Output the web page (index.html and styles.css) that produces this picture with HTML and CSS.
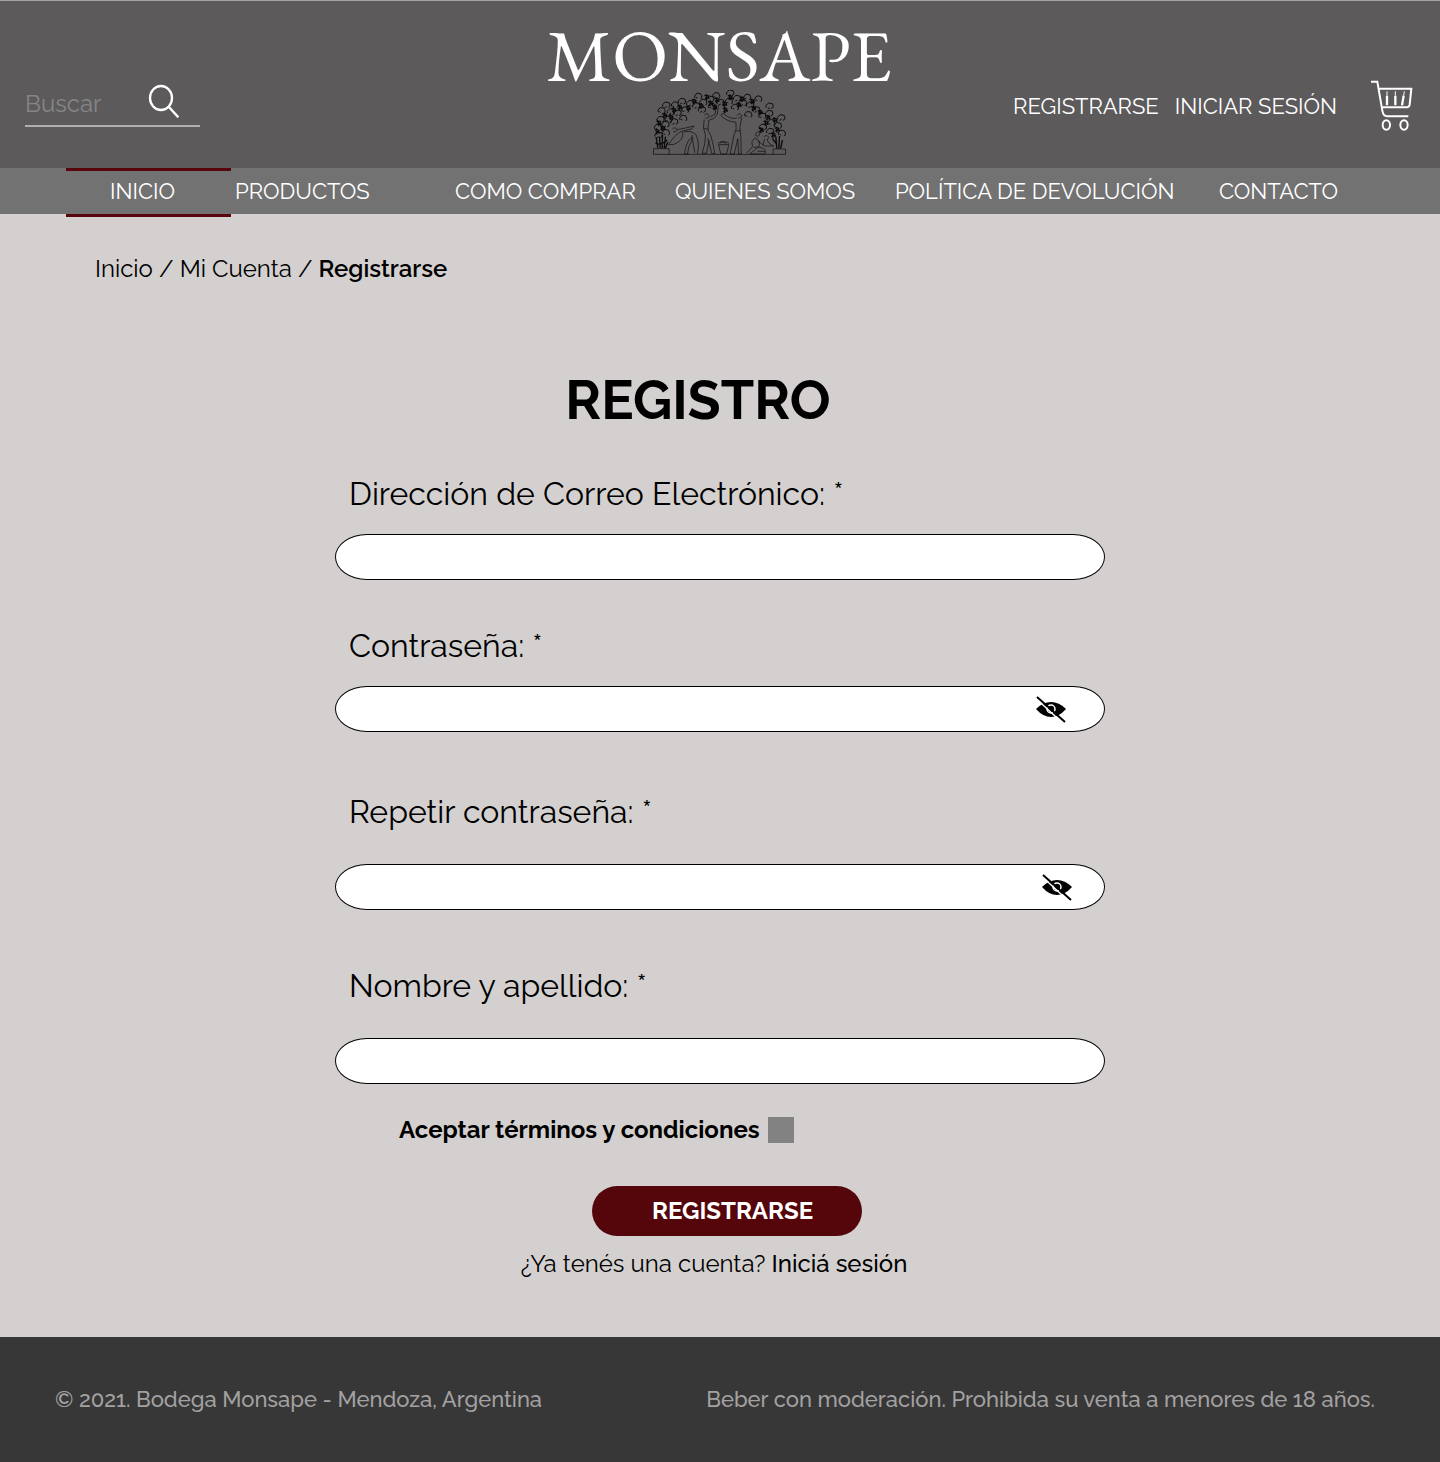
FILE: index.html
```html
<!DOCTYPE html>
<html lang="es">
<head>
<meta charset="utf-8">
<meta name="viewport" content="width=device-width, initial-scale=1">
<title>Registrarse - Monsape</title>
<link rel="stylesheet" href="styles.css">
</head>
<body>
<header class="header">
  <form class="search" role="search">
    <input class="search-input" type="search" placeholder="Buscar" aria-label="Buscar">
    <button class="icon-button search-button" type="submit" aria-label="Buscar">
      <svg width="32" height="34" viewBox="444 42 96 102" fill="none" stroke="#fff" stroke-width="7"><ellipse cx="483" cy="84" rx="33" ry="36"/><path d="M506 110L535 142"/></svg>
    </button>
  </form>
  <a class="logo" href="#">
    <span class="logo-name">MONSAPE</span>
    <svg class="logo-art" width="133" height="65" viewBox="340 210 398 195" fill="none" stroke="#0c0b0b" stroke-width="3" stroke-linejoin="round" aria-hidden="true">
      <defs>
        <path id="leaf" d="M-9 4Q-13-3-6-6Q-3-12 4-9Q12-10 12-2Q14 5 6 7M-4 7L2 4"/>
        <path id="leaf2" d="M8 8Q13 2 10-3Q9-9 2-9Q-4-11-8-5Q-13 0-9 5M-3 6L-6 2"/>
        <path id="grape" stroke-width="4" d="M-7-4L-1-6L5-3L6 4L1 1L-4 4L1 8M-3-2L4 3"/>
      </defs>
      <g stroke-width="3">
        <use href="#leaf" x="355" y="346"/><use href="#leaf2" x="378" y="338"/><use href="#leaf2" x="354" y="322"/><use href="#leaf" x="376" y="314"/><use href="#leaf" x="361" y="299"/><use href="#leaf2" x="386" y="298"/><use href="#leaf2" x="365" y="272"/><use href="#leaf" x="392" y="276"/><use href="#leaf" x="378" y="256"/><use href="#leaf2" x="405" y="255"/><use href="#leaf" x="412" y="280"/><use href="#leaf2" x="430" y="295"/><use href="#leaf" x="402" y="306"/><use href="#leaf" x="425" y="245"/><use href="#leaf2" x="436" y="270"/><use href="#leaf" x="450" y="251"/><use href="#leaf2" x="475" y="229"/><use href="#leaf" x="468" y="258"/><use href="#leaf2" x="490" y="247"/><use href="#leaf" x="485" y="270"/><use href="#leaf" x="510" y="238"/><use href="#leaf2" x="516" y="259"/><use href="#leaf2" x="529" y="227"/><use href="#leaf" x="541" y="248"/><use href="#leaf" x="570" y="220"/><use href="#leaf2" x="567" y="244"/><use href="#leaf" x="590" y="236"/><use href="#leaf2" x="585" y="262"/><use href="#leaf" x="608" y="250"/><use href="#leaf2" x="622" y="232"/><use href="#leaf" x="630" y="256"/><use href="#leaf2" x="655" y="237"/><use href="#leaf" x="648" y="270"/><use href="#leaf2" x="625" y="284"/><use href="#leaf" x="688" y="259"/><use href="#leaf2" x="667" y="288"/><use href="#leaf" x="687" y="281"/><use href="#leaf" x="723" y="294"/><use href="#leaf2" x="694" y="308"/><use href="#leaf" x="668" y="322"/><use href="#leaf2" x="714" y="317"/><use href="#leaf" x="690" y="335"/><use href="#leaf2" x="726" y="340"/>
      </g>
      <use href="#grape" x="352" y="335"/><use href="#grape" x="369" y="325"/><use href="#grape" x="357" y="309"/><use href="#grape" x="374" y="286"/><use href="#grape" x="393" y="291"/><use href="#grape" x="402" y="270"/><use href="#grape" x="420" y="262"/><use href="#grape" x="445" y="264"/><use href="#grape" x="463" y="244"/><use href="#grape" x="484" y="258"/><use href="#grape" x="501" y="231"/><use href="#grape" x="512" y="250"/><use href="#grape" x="531" y="240"/><use href="#grape" x="524" y="262"/><use href="#grape" x="556" y="270"/><use href="#grape" x="571" y="232"/><use href="#grape" x="554" y="252"/><use href="#grape" x="597" y="255"/><use href="#grape" x="607" y="237"/><use href="#grape" x="637" y="244"/><use href="#grape" x="641" y="265"/><use href="#grape" x="661" y="277"/><use href="#grape" x="684" y="293"/><use href="#grape" x="678" y="309"/><use href="#grape" x="705" y="300"/><use href="#grape" x="712" y="329"/><use href="#grape" x="700" y="345"/><use href="#grape" x="664" y="330"/>
      <!-- plinths and the two potted vines -->
      <path d="M341 386V403H737V387H700V403M341 386H388V403" stroke-width="2"/>
      <path d="M349 352L354 384M359 350L361 385M368 344L367 385M377 350L373 385M384 366L377 384M347 368Q360 380 382 360M708 350L711 386M719 348L717 386M728 360L722 386M698 356L710 372" stroke-width="4"/>
      <g stroke-width="2">
        <!-- bending harvester -->
        <path d="M398 327Q407 318 412 330Q409 338 400 335M412 329Q438 324 463 318L455 327L425 334Q404 344 386 374Q402 377 416 366Q433 352 428 336M432 336Q456 330 469 345Q480 370 473 402M457 350Q460 372 465 398M457 345Q458 365 447 380L443 402M451 355Q438 370 434 402H446"/>
        <!-- pickers under the arch -->
        <path d="M494 286Q502 276 508 287Q506 297 497 294M511 291L526 282L530 253M508 300Q523 300 532 284L536 255M493 299L491 324L497 345Q498 367 487 400H500L508 360M507 300L504 330L513 347Q521 374 525 401H516L504 355M492 325L506 328M591 287Q599 276 606 287Q604 296 595 294M591 294Q572 300 550 280L543 286Q563 307 588 306L589 327L582 347L571 402H583L594 356L596 402H604L603 350L600 322L606 293M587 333L601 332M552 280L558 261"/>
        <!-- basket -->
        <path d="M536 374H567L560 402H543ZM534 370Q550 360 568 370M541 369L548 365L558 370"/>
        <!-- seated figures -->
        <path d="M648 340Q653 331 660 338Q662 346 653 349Q645 349 648 340M647 352L636 365L638 380L621 399M647 356Q662 358 658 379L630 402H675L677 395L652 393M641 383Q662 376 678 392M654 363L674 378H700M672 351Q680 342 687 352L682 360L690 372L703 379M674 357L670 375"/>
      </g>
    </svg>
  </a>
  <div class="account">
    <a href="#">REGISTRARSE</a>
    <a href="#">INICIAR SESIÓN</a>
    <a class="cart" href="#" aria-label="Carrito">
      <svg width="43" height="52" viewBox="15 15 129 156" fill="none" stroke="#fff" stroke-width="6"><path d="M18 20H37L52 107Q55 124 67 124H130M42 41H139L134 89Q132 97 124 97H51"/><ellipse cx="64" cy="150" rx="11" ry="14"/><ellipse cx="117" cy="150" rx="11" ry="14"/><path d="M66 49V62M91 49V62M118 49L116 62" stroke-width="3"/><path d="M66 62V91M91 62V91M116 62L111 91" stroke-width="7"/></svg>
    </a>
  </div>
</header>
<nav class="nav" aria-label="Principal">
  <a class="nav-link current" href="#" aria-current="page">INICIO</a>
  <a class="nav-link" href="#">PRODUCTOS</a>
  <a class="nav-link" href="#">COMO COMPRAR</a>
  <a class="nav-link" href="#">QUIENES SOMOS</a>
  <a class="nav-link" href="#">POLÍTICA DE DEVOLUCIÓN</a>
  <a class="nav-link" href="#">CONTACTO</a>
</nav>
<main class="main">
  <div class="breadcrumb"><a href="#">Inicio</a> / <a href="#">Mi Cuenta</a> / <strong>Registrarse</strong></div>
  <form class="form">
    <h1 class="title">REGISTRO</h1>
    <div class="field">
      <label for="email">Dirección de Correo Electrónico: *</label>
      <input id="email" type="email" required>
    </div>
    <div class="field">
      <label for="password">Contraseña: *</label>
      <div class="password">
        <input id="password" type="password" required>
        <button class="icon-button reveal" type="button" aria-label="Mostrar contraseña">
          <svg width="32" height="28" viewBox="0 0 32 28"><path d="M1 14Q8 7 16 7Q24 7 31 14Q24 22 16 22Q8 22 1 14Z"/><circle cx="16" cy="14" r="4" fill="none" stroke="#fff" stroke-width="1.5"/><path d="M1 3.500L27 27.500" stroke="#fff" stroke-width="1.500"/><path d="M2 2L30 27" stroke="#000" stroke-width="2"/></svg>
        </button>
      </div>
    </div>
    <div class="field roomy">
      <label for="repeat">Repetir contraseña: *</label>
      <div class="password">
        <input id="repeat" type="password" required>
        <button class="icon-button reveal" type="button" aria-label="Mostrar contraseña">
          <svg width="32" height="28" viewBox="0 0 32 28"><path d="M1 14Q8 7 16 7Q24 7 31 14Q24 22 16 22Q8 22 1 14Z"/><circle cx="16" cy="14" r="4" fill="none" stroke="#fff" stroke-width="1.5"/><path d="M1 3.500L27 27.500" stroke="#fff" stroke-width="1.500"/><path d="M2 2L30 27" stroke="#000" stroke-width="2"/></svg>
        </button>
      </div>
    </div>
    <div class="field roomy last">
      <label for="name">Nombre y apellido: *</label>
      <input id="name" type="text" required>
    </div>
    <div class="terms">
      <label for="terms">Aceptar términos y condiciones</label>
      <input id="terms" type="checkbox">
    </div>
    <button class="submit" type="submit">REGISTRARSE</button>
    <p class="login">¿Ya tenés una cuenta? <a href="#">Iniciá sesión</a></p>
  </form>
</main>
<footer class="footer">
  <span>© 2021. Bodega Monsape - Mendoza, Argentina</span>
  <span>Beber con moderación. Prohibida su venta a menores de 18 años.</span>
</footer>
</body>
</html>
```
FILE: styles.css
```css
* { box-sizing: border-box; }

body {
  margin: 0;
  min-height: 100vh;
  display: flex;
  flex-direction: column;
  background: #d4d0cf;
  color: #000;
  font: 24px/28px Raleway, "Open Sans", sans-serif;
}

a { color: inherit; text-decoration: none; }
input, button { margin: 0; font: inherit; }
svg { display: block; }

.icon-button { padding: 0; border: 0; background: none; cursor: pointer; }

/* Header */
.header {
  display: grid;
  grid-template-columns: 1fr auto 1fr;
  align-items: end;
  padding: 22px 27px 13px 25px;
  border-top: 1px solid #a5a3a3;
  background: #5c5a5b;
  color: #fff;
}

.search {
  display: flex;
  align-items: flex-start;
  width: 175px;
  margin-bottom: 28px;
  padding-bottom: 2px;
  border-bottom: 2px solid #b0aeae;
}

.search-input {
  flex: 1;
  min-width: 0;
  height: 39px;
  padding: 0;
  border: 0;
  background: none;
  color: #fff;
  appearance: none;
  outline: 0;
}
.search-input::placeholder { color: #868686; opacity: 1; }
.search-button { margin-right: 20px; }

.logo { display: flex; flex-direction: column; align-items: center; gap: 2px; }
.logo-name {
  font: 73px/65px "EB Garamond", "Liberation Serif", serif;
}

.account {
  display: flex;
  justify-content: flex-end;
  align-items: center;
  gap: 16px;
  margin-bottom: 23px;
  font-size: 22px;
}
.cart { margin-left: 17px; }

/* Navigation */
.nav {
  display: grid;
  grid-template-columns: 169fr 220fr 220fr 220fr 324fr 119fr;
  height: 46px;
  padding: 0 102px 0 66px;
  background: #727272;
  color: #fff;
  font-size: 22px;
  line-height: 40px;
  white-space: nowrap;
}
.nav-link {
  height: 49px;
  border: solid transparent;
  border-width: 3px 0;
}
.current {
  margin-right: 4px;
  padding-left: 44px;
  border-color: #58060c;
}

/* Content */
.main { flex: 1; padding: 41px 24px 59px; }
.breadcrumb { padding-left: 71px; }
.breadcrumb strong { font-weight: 600; }

.form {
  max-width: 770px;
  margin: 85px auto 0;
}

.title {
  margin: 0 0 42px;
  padding-right: 44px;
  font-size: 54px;
  line-height: 64px;
  text-align: center;
}

.field {
  display: flex;
  flex-direction: column;
  gap: 20px;
  margin-bottom: 46px;
}
.field label {
  padding-left: 14px;
  font-size: 32px;
  line-height: 40px;
}
.field input {
  display: block;
  width: 100%;
  height: 46px;
  padding: 0 32px;
  border: 1px solid #000;
  border-radius: 32px / 23px;
  background: #fff;
}
.roomy { gap: 32px; margin-top: 60px; }
.last { margin: 56px 0 32px; }

.password { position: relative; }
.password input { padding-right: 76px; }
.reveal { position: absolute; top: 9px; right: 38px; }
.roomy .reveal { right: 32px; }

.terms {
  display: flex;
  align-items: center;
  gap: 8px;
  margin: 0 0 42px 64px;
  font-weight: 700;
}
.terms input {
  width: 26px;
  height: 26px;
  background: #828282;
  appearance: none;
}
.terms input:checked { background: #58060c; }

.submit {
  display: block;
  width: 270px;
  height: 50px;
  margin: 0 0 14px 257px;
  padding: 0 0 0 60px;
  border: 0;
  border-radius: 25px;
  background: #55060b;
  color: #fff;
  font-weight: 700;
  text-align: left;
  cursor: pointer;
}

.login { margin: 0; padding-right: 12px; text-align: center; }
.login a { font-weight: 500; }

/* Footer */
.footer {
  display: flex;
  justify-content: space-between;
  align-items: center;
  gap: 24px;
  padding: 48px 65px 49px 55px;
  background: #373737;
  color: #a3a1a1;
  font-size: 22px;
  font-weight: 500;
}
```
